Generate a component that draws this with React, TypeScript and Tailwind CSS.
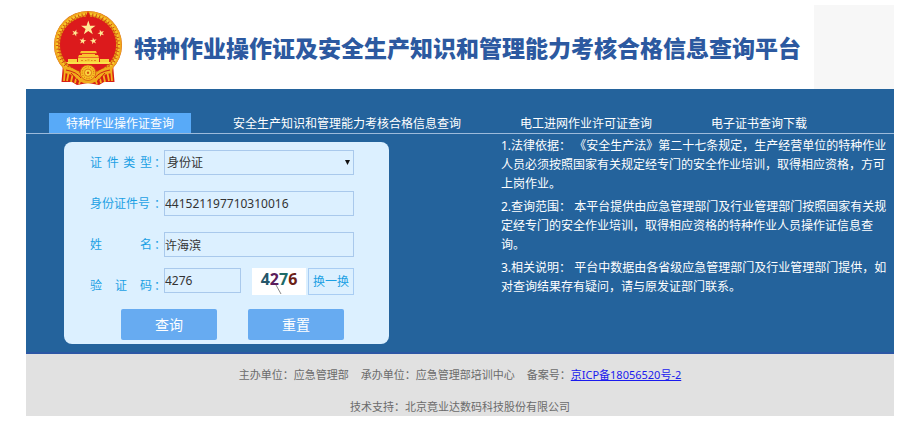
import React, { useState } from 'react'
import clsx from 'clsx'

const TABS = [
  '特种作业操作证查询',
  '安全生产知识和管理能力考核合格信息查询',
  '电工进网作业许可证查询',
  '电子证书查询下载',
]

const NOTES = [
  '1.法律依据： 《安全生产法》第二十七条规定，生产经营单位的特种作业人员必须按照国家有关规定经专门的安全作业培训，取得相应资格，方可上岗作业。',
  '2.查询范围： 本平台提供由应急管理部门及行业管理部门按照国家有关规定经专门的安全作业培训，取得相应资格的特种作业人员操作证信息查询。',
  '3.相关说明： 平台中数据由各省级应急管理部门及行业管理部门提供，如对查询结果存有疑问，请与原发证部门联系。',
]

const STAR = 'M0 -1L.23 -.31L.95 -.31L.36 .12L.59 .81L0 .38L-.59 .81L-.36 .12L-.95 -.31L-.23 -.31Z'

const fieldClass =
  'h-[25px] rounded-none border border-[#a9c9ec] bg-[#dcf0ff] text-xs text-[#333] outline-none'

function Emblem() {
  return (
    <svg className="h-[74px] w-[70px] shrink-0" viewBox="0 0 70 74" role="img" aria-label="国徽">
      {/* ribbon tails */}
      <path d="M10 53L8.5 71L19 71L24 74L35 72L46 74L51 71L61.5 71L60 53Z" fill="#d81e12" />
      <path
        d="M12 58L11 70M16 60L14 70M20 62L18 71M24 63L22 72M28 68L26 73M58 58L59 70M54 60L56 70M50 62L52 71M46 63L48 72M42 68L44 73"
        stroke="#f4b31c"
        strokeWidth="1.8"
      />
      {/* wheat ring */}
      <circle cx="35" cy="34" r="34" fill="#cf4a10" />
      <circle cx="35" cy="34" r="32.8" fill="none" stroke="#efa51c" strokeWidth="2" />
      <circle cx="35" cy="34" r="31" fill="none" stroke="#f7c62a" strokeWidth="2.4" strokeDasharray="2.6 1" />
      <circle cx="35" cy="34" r="28.8" fill="none" stroke="#e79a16" strokeWidth="1.8" strokeDasharray="2 1.2" />
      <circle cx="35" cy="33.5" r="28" fill="#dc1a1c" />
      <path d="M35 0L37 5L35 8L33 5Z" fill="#d81e12" />
      {/* stars */}
      <g fill="#ffeb96">
        <path d={STAR} transform="translate(35.3 17) scale(7.6)" />
        <path d={STAR} transform="translate(22.2 22) rotate(20) scale(3.6)" />
        <path d={STAR} transform="translate(48 22.2) rotate(-20) scale(3.6)" />
        <path d={STAR} transform="translate(29.7 30) rotate(10) scale(3.6)" />
        <path d={STAR} transform="translate(40.5 30) rotate(-10) scale(3.6)" />
      </g>
      {/* gate */}
      <path d="M28 40H43L44 42.3H27ZM29 43H42V44H29ZM26 44H45L46 46.5H25Z" fill="#fbc52f" />
      <path d="M25 47H46V51.5H25ZM15 48H24V51.5H15ZM47 48H56V51.5H47Z" fill="#f9d13b" />
      <path d="M13 51H58L56 53H15Z" fill="#fae04a" />
      <path d="M28 49.5h2M32 49.5h1.5M34.5 49h2M38 49.5h1.5M41 49.5h2" stroke="#e08a1a" />
      {/* gear and knot */}
      <path d="M10 55Q22 57 27 62Q35 69 43 62Q48 57 60 55L59 62Q48 63 44 70Q35 75 26 70Q22 63 11 62Z" fill="#f1ac1c" />
      <path d="M13 59Q24 61 28 67M57 59Q46 61 42 67M18 62L25 70M52 62L45 70" fill="none" stroke="#cf2412" />
      <circle cx="35" cy="61.7" r="7.8" fill="#f6c024" stroke="#d8560f" strokeWidth="0.8" />
      <circle cx="35" cy="61.7" r="5.8" fill="none" stroke="#d8560f" strokeDasharray="1 1.4" />
      <circle cx="35" cy="61.7" r="3.6" fill="#fbd640" stroke="#d8660f" strokeWidth="0.8" />
      <circle cx="35" cy="61.7" r="1.2" fill="#d8560f" />
    </svg>
  )
}

interface FieldRowProps {
  id: string
  label: string
  justified?: boolean
  end?: boolean
  children: React.ReactNode
}

function FieldRow({ id, label, justified, end, children }: FieldRowProps) {
  return (
    <div className={clsx('flex', end ? 'items-end' : 'items-center')}>
      <label htmlFor={id} className="flex w-[74px] shrink-0 gap-0.5 text-xs leading-[18px] text-[#1ba0e4]">
        <span className={clsx('w-[62px] shrink-0', justified && '[text-align-last:justify]')}>{label}</span>
        <span>：</span>
      </label>
      {children}
    </div>
  )
}

function QueryForm() {
  const [idNumber, setIdNumber] = useState('441521197710310016')
  const [name, setName] = useState('许海滨')
  const [code, setCode] = useState('4276')

  return (
    <form
      className="mt-2 w-[325px] shrink-0 rounded-lg bg-[#dcf0ff] pt-2 pr-[35px] pb-1 pl-[26px]"
      onSubmit={(e) => e.preventDefault()}
    >
      <div className="flex flex-col gap-4">
        <FieldRow id="type" label="证 件 类 型" justified>
          <div className="relative flex-1">
            <select id="type" className={clsx(fieldClass, 'block w-full appearance-none pl-0.5')}>
              <option>身份证</option>
            </select>
            <svg className="pointer-events-none absolute top-2.5 right-1 h-[5px] w-[5px]" viewBox="0 0 5 5" aria-hidden="true">
              <path d="M0 0H5L2.5 5Z" fill="#111" />
            </svg>
          </div>
        </FieldRow>
        <FieldRow id="number" label="身份证件号">
          <input id="number" className={clsx(fieldClass, 'min-w-0 flex-1')} value={idNumber} onChange={(e) => setIdNumber(e.target.value)} />
        </FieldRow>
        <FieldRow id="name" label="姓 名" justified>
          <input id="name" className={clsx(fieldClass, 'min-w-0 flex-1')} value={name} onChange={(e) => setName(e.target.value)} />
        </FieldRow>
      </div>

      <div className="mt-[11px]">
        <FieldRow id="code" label="验 证 码" justified end>
          <div className="flex flex-1 items-start">
            <input id="code" className={clsx(fieldClass, 'w-[77px]')} value={code} onChange={(e) => setCode(e.target.value)} />
            <div className="relative ml-[11px] flex h-[27px] w-[54px] justify-center bg-white text-base leading-[23px] font-bold">
              <span className="text-[#26566a]">4</span>
              <span className="text-[#5b1d5c]">2</span>
              <span className="text-[#1e6b68]">7</span>
              <span className="text-[#6b2015]">6</span>
              <svg className="absolute inset-0" viewBox="0 0 54 27" aria-hidden="true">
                <path d="M24 17L29 26" stroke="#888" />
              </svg>
            </div>
            <button type="button" className="ml-0.5 h-[27px] flex-1 border border-[#a9cdf3] text-xs whitespace-nowrap text-[#1ba0e4]">
              换一换
            </button>
          </div>
        </FieldRow>
      </div>

      <div className="mt-3.5 flex gap-[31px] pl-[31px]">
        <button type="submit" className="h-[31px] w-24 rounded-xs bg-[#67abf1] text-sm text-white">查询</button>
        <button type="reset" className="h-[31px] w-24 rounded-xs bg-[#67abf1] text-sm text-white">重置</button>
      </div>
    </form>
  )
}

export default function App() {
  const [active, setActive] = useState(0)

  return (
    <div lang="zh-CN" className="bg-white pt-[5px] pr-[6px] pl-[26px] font-['Noto_Sans','Noto_Sans_CJK_SC',sans-serif]">
      <header className="flex h-[84px] items-stretch pl-[27px]">
        <div className="flex items-center gap-[11px] pt-0.5">
          <Emblem />
          <h1 className="text-[23px] font-black whitespace-nowrap text-[#2c59a0]">
            特种作业操作证及安全生产知识和管理能力考核合格信息查询平台
          </h1>
        </div>
        <div className="ml-auto w-20 shrink-0 bg-[#f7f7f7]" />
      </header>

      <main className="border-b-2 border-[#2b57a5] bg-[#24639c] pt-6 pb-2">
        <nav className="flex gap-[25px] border-b border-[#9dbbdb] pl-[23px]">
          {TABS.map((tab, i) => (
            <button
              key={tab}
              type="button"
              onClick={() => setActive(i)}
              className={clsx('h-5 px-[17px] pt-0.5 text-xs whitespace-nowrap text-white', i === active && 'bg-[#58aaf8]')}
            >
              {tab}
            </button>
          ))}
        </nav>
        <div className="flex items-start justify-between pr-[5px] pl-[38px]">
          <QueryForm />
          <div className="mt-0.5 flex w-[388px] flex-col gap-1 text-xs leading-[19px] text-white">
            {NOTES.map((note) => (
              <p key={note}>{note}</p>
            ))}
          </div>
        </div>
      </main>

      <footer className="flex flex-col items-center gap-4 bg-[#e1e1e1] pt-[13px] pb-px text-[11px] leading-4 text-[#6b6b6b]">
        <p className="flex gap-3">
          <span>主办单位：应急管理部</span>
          <span>承办单位：应急管理部培训中心</span>
          <span>
            备案号：
            <a href="#icp" className="text-[#1a1aee] underline">京ICP备18056520号-2</a>
          </span>
        </p>
        <p>技术支持：北京竟业达数码科技股份有限公司</p>
      </footer>
    </div>
  )
}
